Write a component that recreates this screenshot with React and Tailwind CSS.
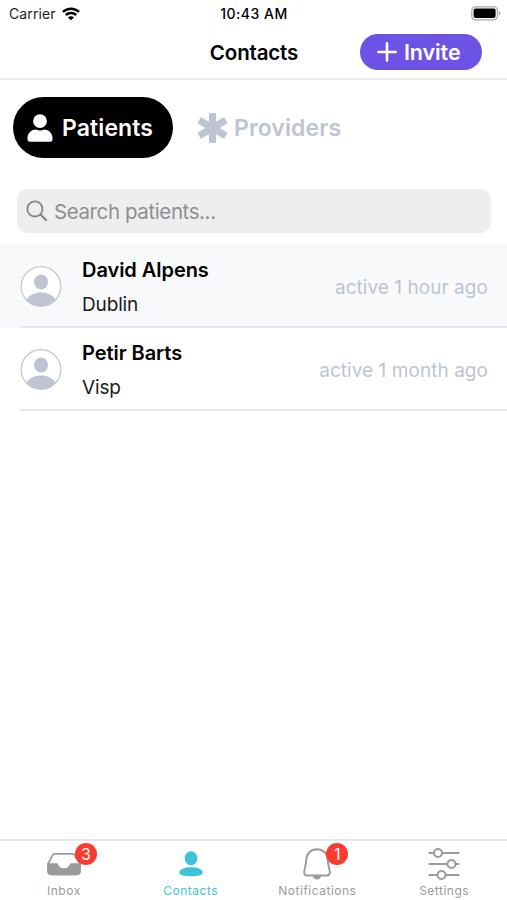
import React from "react";

function Wifi() {
  return (
    <svg width="18" height="14" viewBox="0 0 18 14" fill="none" stroke="#000" strokeWidth="2.5">
      <path d="M0.9 4.9C5.6 0.6 12.4 0.6 17.1 4.9" />
      <path d="M3.8 8C6.8 5.3 11.2 5.3 14.2 8" />
      <path d="M9 13.3L5.9 10.4C7.7 8.9 10.3 8.9 12.1 10.4Z" fill="#000" stroke="none" />
    </svg>
  );
}

function Battery() {
  return (
    <svg width="30" height="15" viewBox="0 0 30 15">
      <rect x="0.8" y="0.8" width="25.6" height="13" rx="3.6" fill="#fff" stroke="#a6a6a6" strokeWidth="1.2" />
      <rect x="2.6" y="2.6" width="22" height="9.4" rx="2" fill="#000" />
      <path d="M27.8 5C29.8 5.6 29.8 9 27.8 9.6Z" fill="#a6a6a6" />
    </svg>
  );
}

function StatusBar() {
  return (
    <div className="grid h-[26px] grid-cols-3 items-center pt-px text-[14px] leading-none">
      <div className="flex items-center gap-[6px] pl-[9px]">
        <span className="pt-px tracking-[0.1px] text-[#222]">Carrier</span>
        <Wifi />
      </div>
      <div className="pt-px pl-px text-center font-medium tracking-[0.5px]">10:43 AM</div>
      <div className="flex justify-end pr-[6px]">
        <Battery />
      </div>
    </div>
  );
}

function Header() {
  return (
    <header className="grid h-[54px] grid-cols-[1fr_auto_1fr] items-center border-b-2 border-[#ececee]">
      <span />
      <h1 className="pt-[2px] pl-px text-[20.5px] font-semibold tracking-[-0.15px]">Contacts</h1>
      <div className="flex justify-end pr-[25px]">
        <button className="flex h-[36px] w-[122px] items-center rounded-full bg-[#6c52e5] pl-[17px] text-[21.5px] font-semibold tracking-[-0.1px] text-white">
          <svg width="20" height="20" viewBox="0 0 20 20" stroke="#fff" strokeWidth="2.6" strokeLinecap="round">
            <path d="M1.4 10H18.6M10 1.4V18.6" />
          </svg>
          <span className="ml-[7px] pt-px">Invite</span>
        </button>
      </div>
    </header>
  );
}

function Segments() {
  return (
    <div className="mt-[17px] flex h-[61px] items-center pl-[13px] text-[23px] font-semibold tracking-[0.1px]">
      <button className="flex h-[61px] w-[160px] items-center rounded-full bg-black pl-[14px] text-white">
        <svg width="26" height="28" viewBox="0 0 26 28" fill="#fff">
          <circle cx="13" cy="7.2" r="6.9" />
          <path d="M0.5 24C0.5 18.8 4.8 15.6 9 15.6C11.3 16.9 14.7 16.9 17 15.6C21.2 15.6 25.5 18.8 25.5 24V25.2Q25.5 27.7 23 27.7H3Q0.5 27.7 0.5 25.2Z" />
        </svg>
        <span className="ml-[9px] pt-px">Patients</span>
      </button>
      <button className="ml-[24px] flex items-center text-[#bec4d2]">
        <svg width="31" height="30" viewBox="-15.5 -15 31 30" fill="currentColor">
          <rect x="-3.6" y="-15" width="7.2" height="30" rx="1" />
          <rect x="-3.6" y="-15.6" width="7.2" height="31.2" rx="1" transform="rotate(60)" />
          <rect x="-3.6" y="-15.6" width="7.2" height="31.2" rx="1" transform="rotate(-60)" />
        </svg>
        <span className="ml-[6px] pt-px">Providers</span>
      </button>
    </div>
  );
}

function Search() {
  return (
    <div className="mx-[17px] mt-[31px] flex h-[44px] w-[474px] items-center rounded-[11px] bg-[#eeeeee] pl-[9px] text-[20.5px] tracking-[-0.4px] text-[#8e8e93]">
      <svg width="22" height="22" viewBox="0 0 22 22" fill="none" stroke="#858589" strokeLinecap="round">
        <circle cx="8.9" cy="8.9" r="7.6" strokeWidth="1.8" />
        <path d="M14.5 14.5L20 20" strokeWidth="2.3" />
      </svg>
      <span className="ml-[6px] pt-[2px]">Search patients...</span>
    </div>
  );
}

function Avatar() {
  return (
    <svg width="42" height="42" viewBox="0 0 42 42">
      <circle cx="21" cy="21.5" r="19.8" fill="#fff" stroke="#c5c9d6" strokeWidth="1.3" />
      <ellipse cx="21" cy="17" rx="7" ry="7.6" fill="#bec4d2" />
      <path d="M6.2 34.6C9.5 29.4 15 27.4 21 27.4S32.5 29.4 35.8 34.6A20 20 0 0 1 6.2 34.6Z" fill="#bec4d2" />
    </svg>
  );
}

function Contact({ name, city, active, selected }) {
  return (
    <li className={selected ? "bg-[#f7f9fb] pt-px" : "bg-white"}>
      <div className="ml-[20px] flex h-[83px] items-center border-b-2 border-[#e9e9eb] pr-[19px]">
        <Avatar />
        <div className="ml-[20px] pt-[4px]">
          <div className="text-[20px] leading-[33px] font-semibold tracking-[-0.05px]">{name}</div>
          <div className="pt-px text-[19px] leading-[34px] tracking-[-0.15px] text-[#1a1a1a]">{city}</div>
        </div>
        <span className="ml-auto pt-[5px] text-[19px] tracking-[0.05px] text-[#bec4d2]">{active}</span>
      </div>
    </li>
  );
}

function Badge({ children, className }) {
  return (
    <span className={`absolute flex size-[22px] items-center justify-center rounded-full bg-[#fb3b30] text-[16px] leading-none tracking-normal text-white ${className}`}>
      {children}
    </span>
  );
}

function Tab({ label, active, children }) {
  return (
    <div className={`flex flex-1 flex-col items-center pt-[4px] pl-px text-[12px] tracking-[0.5px] ${active ? "text-[#3cc3d9]" : "text-[#9b9b9b]"}`}>
      <div className="relative flex h-[37px] items-center">{children}</div>
      <span className="leading-[18px]">{label}</span>
    </div>
  );
}

function TabBar() {
  return (
    <nav className="mt-auto flex h-[61px] border-t-2 border-[#e8e8e8] bg-white">
      <Tab label="Inbox">
        <svg width="36" height="24" viewBox="0 0 36 24">
          <path d="M8.5 1.8H27.5L34 12V18.5Q34 22.5 30 22.5H6Q2 22.5 2 18.5V12L6.5 3.2Q7.2 1.8 8.5 1.8Z" fill="#fff" stroke="#9b9b9b" strokeWidth="1.7" />
          <path d="M1.2 11.3H11C12.5 11.3 12.2 16.3 18 16.3S23.5 11.3 25 11.3H34.8V18.5Q34.8 23.3 30 23.3H6Q1.2 23.3 1.2 18.5Z" fill="#9b9b9b" />
        </svg>
        <Badge className="-top-[2px] left-[29px]">3</Badge>
      </Tab>
      <Tab label="Contacts" active>
        <svg width="24" height="26" viewBox="0 0 24 26" fill="currentColor">
          <ellipse cx="12" cy="7.3" rx="6.3" ry="7" />
          <path d="M0.3 21.5C0.3 18.2 5.5 16.2 12 16.2S23.7 18.2 23.7 21.5C23.7 24.2 18.5 25.3 12 25.3S0.3 24.2 0.3 21.5Z" />
        </svg>
      </Tab>
      <Tab label="Notifications">
        <svg width="28" height="32" viewBox="0 0 28 32" fill="none" stroke="#9b9b9b" strokeWidth="1.9">
          <path d="M14 1.2C7.5 1.2 3.5 5.8 3.2 12C3 18 1.2 21 1.2 24.5Q1.2 27.5 4.2 27.5H23.8Q26.8 27.5 26.8 24.5C26.8 21 25 18 24.8 12C24.5 5.8 20.5 1.2 14 1.2Z" />
          <path d="M9.8 28H18.2C17.5 32.5 10.5 32.5 9.8 28Z" fill="#9b9b9b" stroke="none" />
        </svg>
        <Badge className="-top-[2px] left-[23px]">1</Badge>
      </Tab>
      <Tab label="Settings">
        <svg width="32" height="32" viewBox="0 0 32 32" fill="#fff" stroke="#9b9b9b" strokeWidth="2">
          <path d="M0.5 5H31.5M0.5 16H31.5M0.5 27H31.5" />
          <circle cx="10" cy="5" r="4" />
          <circle cx="23.5" cy="16" r="4" />
          <circle cx="13.5" cy="27" r="4" />
        </svg>
      </Tab>
    </nav>
  );
}

export default function App() {
  return (
    <main className="flex h-[900px] w-[507px] flex-col overflow-hidden bg-white font-[Inter,sans-serif] whitespace-nowrap text-black">
      <StatusBar />
      <Header />
      <Segments />
      <Search />
      <ul className="mt-[11px]">
        <Contact name="David Alpens" city="Dublin" active="active 1 hour ago" selected />
        <Contact name="Petir Barts" city="Visp" active="active 1 month ago" />
      </ul>
      <TabBar />
    </main>
  );
}
